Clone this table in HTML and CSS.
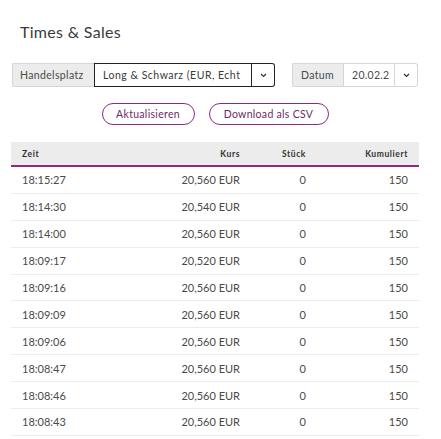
FILE: index.html
```html
<!DOCTYPE html>
<html lang="de">
<head>
<meta charset="utf-8">
<title>Times &amp; Sales</title>
<link rel="stylesheet" href="styles.css">
</head>
<body>
<div class="page">
  <h1 class="title">Times &amp; Sales</h1>

  <div class="controls">
    <div class="group">
      <div class="label label-venue">Handelsplatz</div>
      <div class="select">Long &amp; Schwarz (EUR, Echt</div>
      <div class="chev chev-dark">
        <svg width="7" height="5" viewBox="0 0 7 5"><path d="M1 1 L3.5 3.5 L6 1" fill="none" stroke="#333" stroke-width="1.2"/></svg>
      </div>
    </div>
    <div class="group group-date">
      <div class="label label-date">Datum</div>
      <div class="value">20.02.2</div>
      <div class="chev chev-light">
        <svg width="7" height="5" viewBox="0 0 7 5"><path d="M1 1 L3.5 3.5 L6 1" fill="none" stroke="#333" stroke-width="1.2"/></svg>
      </div>
    </div>
  </div>

  <div class="actions">
    <button class="btn btn-refresh">Aktualisieren</button>
    <button class="btn btn-csv">Download als CSV</button>
  </div>

  <div class="table">
    <div class="row head">
      <div class="c-time">Zeit</div>
      <div class="c-num">Kurs</div>
      <div class="c-num">Stück</div>
      <div class="c-num">Kumuliert</div>
    </div>
    <div class="row"><div class="c-time">18:15:27</div><div class="c-num">20,560 EUR</div><div class="c-num">0</div><div class="c-num">150</div></div>
    <div class="row"><div class="c-time">18:14:30</div><div class="c-num">20,540 EUR</div><div class="c-num">0</div><div class="c-num">150</div></div>
    <div class="row"><div class="c-time">18:14:00</div><div class="c-num">20,560 EUR</div><div class="c-num">0</div><div class="c-num">150</div></div>
    <div class="row"><div class="c-time">18:09:17</div><div class="c-num">20,520 EUR</div><div class="c-num">0</div><div class="c-num">150</div></div>
    <div class="row"><div class="c-time">18:09:16</div><div class="c-num">20,560 EUR</div><div class="c-num">0</div><div class="c-num">150</div></div>
    <div class="row"><div class="c-time">18:09:09</div><div class="c-num">20,560 EUR</div><div class="c-num">0</div><div class="c-num">150</div></div>
    <div class="row"><div class="c-time">18:09:06</div><div class="c-num">20,560 EUR</div><div class="c-num">0</div><div class="c-num">150</div></div>
    <div class="row"><div class="c-time">18:08:47</div><div class="c-num">20,560 EUR</div><div class="c-num">0</div><div class="c-num">150</div></div>
    <div class="row"><div class="c-time">18:08:46</div><div class="c-num">20,560 EUR</div><div class="c-num">0</div><div class="c-num">150</div></div>
    <div class="row"><div class="c-time">18:08:43</div><div class="c-num">20,560 EUR</div><div class="c-num">0</div><div class="c-num">150</div></div>
  </div>
</div>
</body>
</html>
```

FILE: styles.css
```css
* { box-sizing: border-box; }

body {
  margin: 0;
  background: #fff;
  font-family: Lato, "Open Sans", "Liberation Sans", sans-serif;
  color: #333;
}

.page {
  padding: 22px 0 0 11px;
  width: 441px;
}

.title {
  margin: 0 0 0 9px;
  font-size: 16px;
  line-height: 20px;
  font-weight: 400;
  color: #3a3a3a;
  letter-spacing: 0.3px;
}

.controls {
  display: flex;
  align-items: center;
  margin: 21px 0 0 1px;
}

.group {
  display: flex;
  height: 24px;
}

.group-date {
  margin-left: 17px;
}

.label {
  display: flex;
  align-items: center;
  background: #ececec;
  border: 1px solid #d6d6d6;
  border-right: none;
  border-radius: 2px 0 0 2px;
  font-size: 10.5px;
  color: #4a4a4a;
  letter-spacing: 0.35px;
}

.label-venue {
  width: 82px;
  padding-left: 7px;
}

.label-date {
  width: 51px;
  padding-left: 8px;
}

.select {
  width: 158px;
  border: 1px solid #222;
  padding: 0 0 0 8px;
  display: flex;
  align-items: center;
  white-space: nowrap;
  overflow: hidden;
  font-size: 10.5px;
  letter-spacing: 0.5px;
  color: #3a3a3a;
}

.value {
  width: 52px;
  border: 1px solid #d6d6d6;
  display: flex;
  align-items: center;
  padding-left: 8px;
  font-size: 10.5px;
  letter-spacing: 0.3px;
  color: #4a4a4a;
}

.chev {
  width: 23px;
  display: flex;
  align-items: center;
  justify-content: center;
  border-radius: 0 3px 3px 0;
}

.chev-dark {
  border: 1px solid #222;
  border-left: none;
}

.chev-light {
  border: 1px solid #d6d6d6;
  border-left: none;
}

.actions {
  display: flex;
  justify-content: center;
  gap: 14px;
  width: 408px;
  margin-top: 16px;
}

.btn {
  height: 22px;
  border: 1px solid #8b2a84;
  border-radius: 11px;
  background: #fff;
  color: #6d2a66;
  font-family: inherit;
  font-size: 10.5px;
  letter-spacing: 0.3px;
  padding: 0;
  cursor: pointer;
}

.btn-refresh { width: 93px; }
.btn-csv { width: 120px; }

.table {
  margin-top: 17px;
  width: 408px;
}

.row {
  display: grid;
  grid-template-columns: 138px 80px 66px 102px;
  align-items: center;
  padding: 0 11px;
  height: 26.9px;
  border-bottom: 1px solid #ededed;
  font-size: 11px;
  color: #4a4a4a;
}

.row.head {
  height: 25px;
  background: #ececec;
  border-bottom: 2px solid #8b2a84;
  font-size: 8.5px;
  font-weight: 700;
  letter-spacing: 0.6px;
  color: #333;
}

.c-time { text-align: left; }
.c-num { text-align: right; }
```
